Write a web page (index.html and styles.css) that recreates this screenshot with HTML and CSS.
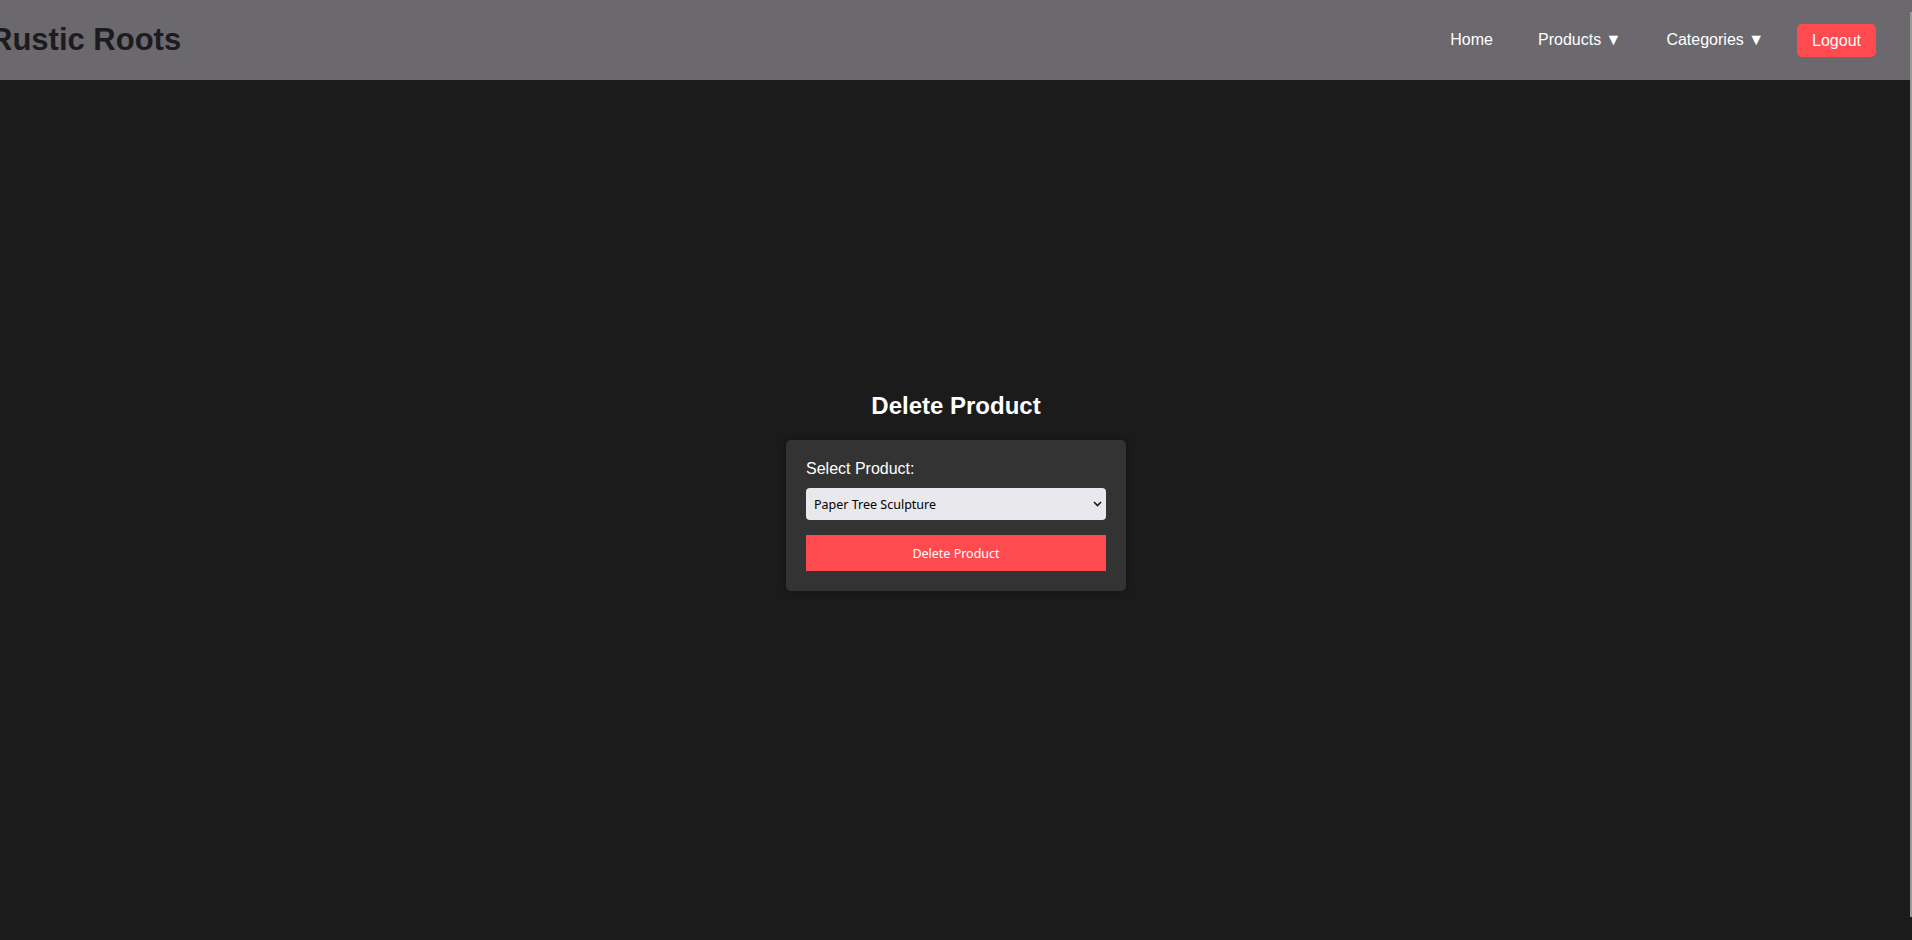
FILE: index.html
```html
<!DOCTYPE html>
<html lang="en">
<head>
<meta charset="utf-8">
<title>Delete Product - Rustic Roots</title>
<link rel="stylesheet" href="styles.css">
</head>
<body>
<header class="header">
  <h1 class="brand">Rustic Roots</h1>
  <nav class="nav">
    <a class="nav-link" href="#">Home</a>
    <a class="nav-link" href="#">Products ▼</a>
    <a class="nav-link" href="#">Categories ▼</a>
    <button class="logout" type="button">Logout</button>
  </nav>
</header>
<main class="main">
  <h2 class="title">Delete Product</h2>
  <form class="card">
    <label class="label" for="product">Select Product:</label>
    <div class="select-wrap">
      <select class="select" id="product">
        <option>Paper Tree Sculpture</option>
      </select>
      <svg class="chevron" width="9" height="6" viewBox="0 0 9 6" aria-hidden="true">
        <path d="M1 1 L4.5 4.5 L8 1" fill="none" stroke="#1a1a1a" stroke-width="1.6"/>
      </svg>
    </div>
    <button class="delete" type="button">Delete Product</button>
  </form>
</main>
<div class="edge"></div>
</body>
</html>
```

FILE: styles.css
```css
html, body {
  margin: 0;
  padding: 0;
}
body {
  background: #1b1b1b;
  color: #fff;
  font-family: "Liberation Sans", Arial, sans-serif;
  min-height: 100vh;
  overflow: hidden;
}
.header {
  height: 80px;
  background: #6b686e;
  display: flex;
  align-items: center;
  justify-content: space-between;
  padding-right: 36px;
}
.brand {
  margin: 0 0 0 -10px;
  font-size: 31px;
  font-weight: bold;
  color: #1c1b1d;
}
.nav {
  display: flex;
  align-items: center;
  gap: 21px;
}
.nav-link {
  color: #fff;
  text-decoration: none;
  font-size: 16px;
  padding: 8px 12px;
}
.logout {
  background: #ff4a4f;
  color: #fff;
  border: 0;
  border-radius: 5px;
  padding: 8px 15px;
  font-size: 16px;
  font-family: "Liberation Sans", Arial, sans-serif;
  line-height: 17px;
}
.main {
  display: flex;
  flex-direction: column;
  align-items: center;
  padding-top: 292px;
}
.title {
  font-size: 24px;
  font-weight: bold;
  margin: 20px 0;
  color: #fff;
}
.card {
  box-sizing: border-box;
  width: 340px;
  padding: 20px;
  background: #333333;
  border-radius: 5px;
  box-shadow: 0 0 10px rgba(0, 0, 0, 0.35);
  display: flex;
  flex-direction: column;
}
.label {
  font-size: 16px;
  line-height: 18px;
  margin-bottom: 10px;
}
.select-wrap {
  position: relative;
  height: 32px;
}
.select {
  -webkit-appearance: none;
  appearance: none;
  height: 32px;
  width: 100%;
  background-color: #e9e8ed;
  color: #000;
  border: 0;
  border-radius: 4px;
  padding: 0 24px 0 8px;
  font-family: "Noto Sans", "Open Sans", sans-serif;
  font-size: 12.5px;
}
.chevron {
  position: absolute;
  right: 4px;
  top: 13px;
  pointer-events: none;
}
.delete {
  margin-top: 15px;
  height: 36px;
  width: 100%;
  background: #ff4a4f;
  color: #fff;
  border: 0;
  font-family: "Noto Sans", "Open Sans", sans-serif;
  font-size: 12.5px;
}
.edge {
  position: fixed;
  top: 12px;
  right: 0;
  width: 2px;
  height: 905px;
  background: #9a9a9a;
}
```
